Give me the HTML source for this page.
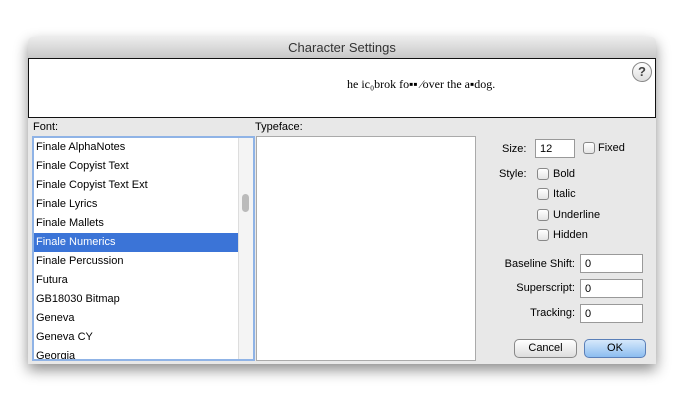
<!DOCTYPE html><html><head><style>
body{margin:0;width:684px;height:402px;background:#fff;font-family:"Liberation Sans",sans-serif;font-size:11px;color:#000;position:relative;overflow:hidden}
.a{position:absolute}
.win{left:28px;top:37px;width:628px;height:327px;background:#e8e8e8;border-radius:5px 5px 0 0;box-shadow:0 6px 14px rgba(0,0,0,.45);overflow:hidden}
.title{left:0;top:0;width:628px;height:21px;background:linear-gradient(#ececec,#c8c8c8);text-align:center;font-size:13px;line-height:21px;color:#333}
.prev{left:0;top:21px;width:626px;height:58px;background:#fff;border:1px solid #111}
.list{left:4px;top:99px;width:219px;height:221px;background:#fff;border:2px solid #8fb3e6;overflow:hidden}
.row{position:absolute;left:0;width:204px;height:19px;line-height:19px;padding-left:2px;font-size:11px}
.sel{background:#3b74d7;color:#fff}
.cb{position:absolute;width:10px;height:10px;border:1px solid #888;border-radius:3px;background:linear-gradient(#fff,#e4e4e4)}
.inp{position:absolute;background:#fff;border:1px solid #999;line-height:18px;padding-left:4px;box-sizing:border-box;height:19px}
.btn{position:absolute;height:17px;border:1px solid #888;border-radius:5px;text-align:center;line-height:17px;background:linear-gradient(#fff,#ddd)}
</style></head><body>
<div class="a win">
<div class="a title">Character Settings</div>
<div class="a prev"><div class="a" style="left:318px;top:18px;font-family:'Liberation Serif',serif;font-size:12px">he ic₀brok fo▪▪ ⁄over the a▪dog.</div>
<div class="a" style="left:603px;top:3px;width:18px;height:18px;border:1px solid #888;border-radius:50%;text-align:center;line-height:18px;font-size:13px;font-weight:bold;color:#444;background:linear-gradient(#fff,#ddd)">?</div></div>
<div class="a" style="left:5px;top:84px">Font:</div>
<div class="a" style="left:227px;top:84px">Typeface:</div>
<div class="a list">
<div class="row" style="top:0px">Finale AlphaNotes</div>
<div class="row" style="top:19px">Finale Copyist Text</div>
<div class="row" style="top:38px">Finale Copyist Text Ext</div>
<div class="row" style="top:57px">Finale Lyrics</div>
<div class="row" style="top:76px">Finale Mallets</div>
<div class="row sel" style="top:95px">Finale Numerics</div>
<div class="row" style="top:114px">Finale Percussion</div>
<div class="row" style="top:133px">Futura</div>
<div class="row" style="top:152px">GB18030 Bitmap</div>
<div class="row" style="top:171px">Geneva</div>
<div class="row" style="top:190px">Geneva CY</div>
<div class="row" style="top:209px">Georgia</div>
<div class="a" style="left:204px;top:0;width:15px;height:221px;background:#f4f4f4;border-left:1px solid #ddd"></div>
<div class="a" style="left:208px;top:56px;width:7px;height:18px;background:#bbb;border-radius:4px"></div>
</div>
<div class="a" style="left:228px;top:99px;width:218px;height:223px;background:#fff;border:1px solid #aaa"></div>
<div class="a" style="left:474px;top:106px">Size:</div>
<div class="inp" style="left:507px;top:102px;width:40px">12</div>
<div class="cb" style="left:555px;top:105px"></div><div class="a" style="left:570px;top:105px">Fixed</div>
<div class="a" style="left:471px;top:131px">Style:</div>
<div class="cb" style="left:509px;top:131px"></div><div class="a" style="left:525px;top:131px">Bold</div>
<div class="cb" style="left:509px;top:151px"></div><div class="a" style="left:525px;top:151px">Italic</div>
<div class="cb" style="left:509px;top:172px"></div><div class="a" style="left:525px;top:172px">Underline</div>
<div class="cb" style="left:509px;top:192px"></div><div class="a" style="left:525px;top:192px">Hidden</div>
<div class="a" style="left:440px;top:221px;width:107px;text-align:right">Baseline Shift:</div>
<div class="inp" style="left:552px;top:217px;width:63px">0</div>
<div class="a" style="left:440px;top:245px;width:107px;text-align:right">Superscript:</div>
<div class="inp" style="left:552px;top:242px;width:63px">0</div>
<div class="a" style="left:440px;top:270px;width:107px;text-align:right">Tracking:</div>
<div class="inp" style="left:552px;top:267px;width:63px">0</div>
<div class="btn" style="left:486px;top:302px;width:61px">Cancel</div>
<div class="btn" style="left:556px;top:302px;width:60px;border-color:#5a7fb8;background:linear-gradient(#d6e8fb,#8cbdf0)">OK</div>
</div>
</body></html>
